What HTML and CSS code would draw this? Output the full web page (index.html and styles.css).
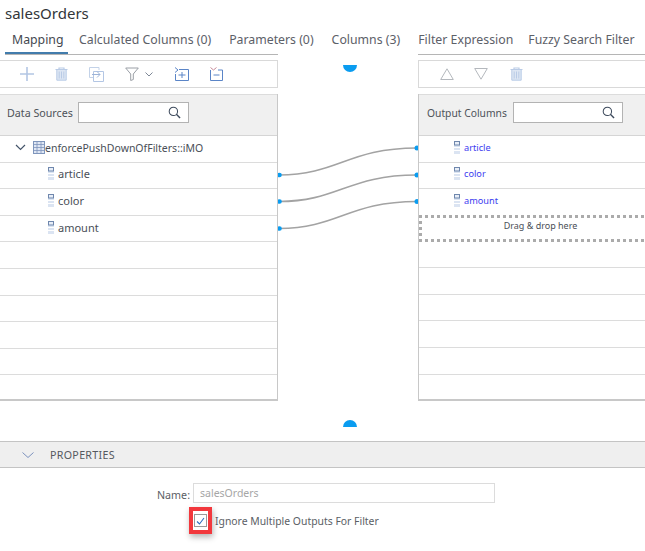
FILE: index.html
```html
<!DOCTYPE html>
<html lang="en">
<head>
<meta charset="utf-8">
<title>salesOrders</title>
<link rel="stylesheet" href="styles.css">
</head>
<body>
<svg class="defs" width="0" height="0" aria-hidden="true">
  <symbol id="col" viewBox="0 0 6 13">
    <rect x="0" y="0" width="6" height="13" fill="#dbe4f2"/>
    <rect x="0.500" y="0.500" width="5" height="3.500" fill="#e8eef7" stroke="#6f87ad"/>
    <path d="M0 6.500h6M0 9.500h6" stroke="#fff"/>
  </symbol>
  <symbol id="search" viewBox="0 0 14 14">
    <circle cx="5.8" cy="5.8" r="4.5" fill="none" stroke="#3d4a5c" stroke-width="1.1"/>
    <path d="M9 9l4 4" stroke="#3d4a5c" stroke-width="1.5"/>
  </symbol>
  <symbol id="trash" viewBox="0 0 13 14">
    <path d="M0.5 2.5h12M4 2.5V1h5v1.5" fill="none" stroke="#b9cbe6" stroke-width="1.2"/>
    <path d="M1.8 3v10.2h9.4V3" fill="#dde6f3" stroke="#b9cbe6"/>
    <path d="M4.2 4.5v7M6.5 4.5v7M8.8 4.5v7" stroke="#b9cbe6"/>
  </symbol>
</svg>

<h1 class="title">salesOrders</h1>

<nav class="tabs">
  <span class="tab tab-active">Mapping</span>
  <span class="tab">Calculated Columns (0)</span>
  <span class="tab">Parameters (0)</span>
  <span class="tab">Columns (3)</span>
  <span class="tab tab-filter">Filter Expression</span>
  <span class="tab">Fuzzy Search Filter</span>
</nav>

<main class="mapping">
  <section class="pane pane-left">
    <div class="toolbar toolbar-left">
      <svg class="tool" width="14" height="14" viewBox="0 0 14 14"><path d="M7 0v14M0 7h14" stroke="#b3c6e4" stroke-width="1.6"/></svg>
      <svg class="tool" width="13" height="14"><use href="#trash"/></svg>
      <svg class="tool" width="15" height="15" viewBox="0 0 15 15"><path d="M10 3V.5H.5v10H4" fill="none" stroke="#c3d2e8"/><path d="M4.5 4.5h10v10h-10z" fill="none" stroke="#b3c6e4"/><path d="M3 7.5h8M8 4.5l3 3-3 3" fill="none" stroke="#9db4d8"/></svg>
      <span class="filter">
        <svg width="14" height="14" viewBox="0 0 14 14"><path d="M.7 1h12.6L8.3 7v5.5l-2.600 1V7z" fill="none" stroke="#9a9fa6"/></svg>
        <svg width="8" height="5" viewBox="0 0 8 5"><path d="M.5.5L4 4 7.5.5" fill="none" stroke="#7d8796"/></svg>
      </span>
      <svg class="tool" width="14" height="14" viewBox="0 0 14 14"><path d="M0 .5l3 2.500-3 2.500" fill="none" stroke="#5b85c7"/><path d="M4 2.500h9.500v11H.5V7" fill="none" stroke="#5b85c7"/><path d="M3.500 8h7M7 5v6" stroke="#5b85c7"/></svg>
      <svg class="tool" width="13" height="14" viewBox="0 0 13 14"><path d="M.5.5l3 2.500 3-2.500" fill="none" stroke="#c68a9a"/><path d="M8 3h4.500v10.500H.5V3" fill="none" stroke="#5b85c7"/><path d="M3.500 8h6" stroke="#5b85c7"/></svg>
    </div>
    <div class="panel">
      <div class="panel-head">
        <label class="panel-label">Data Sources</label>
        <span class="search search-left"><svg width="13" height="13"><use href="#search"/></svg></span>
      </div>
      <ul class="rows rows-left">
        <li class="row row-table">
          <svg class="caret" width="11" height="7" viewBox="0 0 11 7"><path d="M1 1l4.500 4.500L10 1" fill="none" stroke="#44546a" stroke-width="1.200"/></svg>
          <svg width="12" height="13" viewBox="0 0 12 13"><rect x=".5" y=".5" width="11" height="12" fill="#dfe7f4" stroke="#7f96bc"/><path d="M.5 3.500h11M.5 6.500h11M.5 9.500h11M4 .5v12M8 .5v12" stroke="#7f96bc" stroke-width=".8"/></svg>
          <span>enforcePushDownOfFilters::iMO</span>
        </li>
        <li class="row row-col"><svg width="6" height="13"><use href="#col"/></svg><span>article</span></li>
        <li class="row row-col"><svg width="6" height="13"><use href="#col"/></svg><span>color</span></li>
        <li class="row row-col"><svg width="6" height="13"><use href="#col"/></svg><span>amount</span></li>
        <li class="row"></li><li class="row"></li><li class="row"></li><li class="row"></li><li class="row"></li><li class="row"></li>
      </ul>
    </div>
  </section>

  <section class="gutter">
    <span class="handle handle-top"></span>
    <svg class="links" width="140" height="120" viewBox="0 0 140 120">
      <g fill="none" stroke="#a3a3a3" stroke-width="1.600">
        <path d="M1 45C60 45 70 18 139 18"/>
        <path d="M1 71.500C60 71.500 70 45 139 45"/>
        <path d="M1 98.500C60 98.500 70 71.500 139 71.500"/>
      </g>
      <g fill="#0a9cf0">
        <circle cx="1.500" cy="45" r="2.300"/><circle cx="1.500" cy="71.500" r="2.300"/><circle cx="1.500" cy="98.500" r="2.300"/>
        <circle cx="139" cy="18" r="2.500"/><circle cx="139" cy="45" r="2.500"/><circle cx="139" cy="71.500" r="2.500"/>
      </g>
    </svg>
    <span class="handle handle-bottom"></span>
  </section>

  <section class="pane pane-right">
    <div class="toolbar toolbar-right">
      <svg width="14" height="12" viewBox="0 0 14 12"><path d="M7 .8L13.300 11.500H.7z" fill="none" stroke="#b4b8bd"/></svg>
      <svg width="14" height="12" viewBox="0 0 14 12"><path d="M7 11.200L13.300 .5H.7z" fill="none" stroke="#b4b8bd"/></svg>
      <svg class="trash-right" width="13" height="14"><use href="#trash"/></svg>
    </div>
    <div class="panel panel-right">
      <div class="panel-head">
        <label class="panel-label">Output Columns</label>
        <span class="search search-right"><svg width="13" height="13"><use href="#search"/></svg></span>
      </div>
      <ul class="rows rows-right">
        <li class="row row-out"><svg width="6" height="13"><use href="#col"/></svg><span>article</span></li>
        <li class="row row-out"><svg width="6" height="13"><use href="#col"/></svg><span>color</span></li>
        <li class="row row-out row-last-out"><svg width="6" height="13"><use href="#col"/></svg><span>amount</span></li>
        <li class="drop">Drag &amp; drop here</li>
        <li class="row row-r1"></li><li class="row"></li><li class="row"></li><li class="row"></li><li class="row"></li><li class="row row-end"></li>
      </ul>
    </div>
  </section>
</main>

<section class="props">
  <header class="props-head">
    <svg width="12" height="6" viewBox="0 0 12 6"><path d="M.5.500L6 5.500 11.500.5" fill="none" stroke="#7c92bd"/></svg>
    <span>PROPERTIES</span>
  </header>
  <div class="field">
    <label class="field-label">Name:</label>
    <span class="field-input">salesOrders</span>
  </div>
  <div class="check-line">
    <span class="mark">
      <span class="checkbox"><svg width="9" height="8" viewBox="0 0 9 8"><path d="M1 4.500L3.500 7 8 1" fill="none" stroke="#2f6fc0" stroke-width="1.100"/></svg></span>
    </span>
    <span class="check-label">Ignore Multiple Outputs For Filter</span>
  </div>
</section>
</body>
</html>
```

FILE: styles.css
```css
* { box-sizing: border-box; }
html, body { margin: 0; padding: 0; }
body {
  width: 645px;
  height: 551px;
  overflow: hidden;
  background: #fff;
  color: #4a4f57;
  font-family: "Noto Sans", "Open Sans", sans-serif;
  font-size: 11px;
}
.defs { position: absolute; }
.title {
  margin: 0;
  height: 28px;
  padding: 4px 0 0 5px;
  font-size: 15px;
  line-height: 18px;
  font-weight: 400;
  color: #32363a;
}
.tabs {
  display: flex;
  height: 27px;
  padding-left: 5px;
  overflow: hidden;
  white-space: nowrap;
  background: linear-gradient(#b5b5b5, #b5b5b5) 5px 26px / 273px 1px no-repeat,
              linear-gradient(#b5b5b5, #b5b5b5) 418px 26px / 227px 1px no-repeat;
}
.tab {
  flex: none;
  padding: 3px 0 0;
  margin-right: 18px;
  font-size: 12.300px;
  line-height: 17px;
  color: #5c6068;
}
.tab-active {
  width: 63px;
  padding-left: 7px;
  margin-right: 11px;
  height: 26px;
  color: #44484f;
  border-bottom: 2px solid #427cac;
}
.tab-filter { margin-right: 15px; }
.mapping {
  display: flex;
  height: 386px;
  padding-top: 5px;
}
.pane-left { width: 278px; flex: none; }
.gutter {
  position: relative;
  width: 140px;
  flex: none;
}
.pane-right { flex: 1; min-width: 0; }
.toolbar {
  display: flex;
  align-items: center;
  height: 28px;
  background: #fff;
  border: 1px solid #d9d9d9;
}
.toolbar-left { border-left: 0; padding-left: 20px; }
.toolbar-right { border-right: 0; padding-left: 21px; gap: 20px; }
.trash-right { margin-left: 2px; }
.tool { flex: none; margin-right: 21px; }
.filter {
  display: flex;
  align-items: center;
  gap: 6px;
  margin-right: 22px;
}
.panel {
  margin-top: 6px;
  border-right: 1px solid #c8c8c8;
  border-bottom: 2px solid #c8c8c8;
  height: 307px;
}
.panel-right {
  border-right: 0;
  border-left: 1px solid #c8c8c8;
}
.panel-head {
  display: flex;
  align-items: center;
  height: 42px;
  padding: 0 0 5px 7px;
  background: #f0f0f0;
  border-top: 1px solid #dcdcdc;
  border-bottom: 1px solid #d5d5d5;
}
.panel-right .panel-head { padding-left: 8px; }
.panel-label { font-size: 10.700px; color: #4d5259; white-space: nowrap; }
.panel-right .panel-label { font-size: 10.300px; }
.search {
  display: flex;
  align-items: center;
  justify-content: flex-end;
  height: 21px;
  padding-right: 7px;
  background: #fff;
  border: 1px solid #b3b3b3;
}
.search-left { width: 111px; margin-left: 5px; }
.search-right { width: 110px; margin-left: 6px; }
.rows { list-style: none; margin: 0; padding: 0; }
.row {
  display: flex;
  align-items: center;
  height: 26.600px;
  border-bottom: 1px solid #dcdcdc;
  font-size: 11px;
  color: #4a4f57;
}
.rows-left .row:last-child { border-bottom: 0; }
.row-table { padding-left: 15px; padding-bottom: 2px; }
.row-table .caret { margin-right: 7px; }
.row-table span { font-size: 10.500px; white-space: nowrap; }
.row-col { padding-left: 48px; padding-bottom: 3px; }
.row-col span { margin-left: 4px; }
.row-out { padding-left: 35px; padding-bottom: 3px; }
.row-out span { margin-left: 4px; color: #3c3cf0; font-size: 9.200px; }
.row-last-out { border-bottom: 0; height: 26px; }
.drop {
  height: 27px;
  padding: 3px 0 0 17px;
  text-align: center;
  font-size: 9px;
  line-height: 15px;
  color: #4a4f57;
  background:
    repeating-linear-gradient(90deg, #ababab 0 3px, transparent 3px 6px) 0 0 / 100% 3px no-repeat,
    repeating-linear-gradient(90deg, #ababab 0 3px, transparent 3px 6px) 0 100% / 100% 3px no-repeat,
    repeating-linear-gradient(0deg, #ababab 0 3px, transparent 3px 6px) 0 0 / 3px 100% no-repeat;
}
.row-r1 { height: 26px; margin-top: 0; }
.rows-right .row-end { border-bottom: 0; height: 29px; }
.handle {
  position: absolute;
  left: 65px;
  width: 14px;
  height: 7px;
  background: #0a9cf0;
}
.handle-top { top: 5px; border-radius: 0 0 7px 7px; }
.handle-bottom { top: 360px; border-radius: 7px 7px 0 0; }
.links { position: absolute; left: 0; top: 70px; }
.props {
  height: 110px;
}
.props-head {
  display: flex;
  align-items: center;
  height: 27px;
  padding-left: 22px;
  gap: 16px;
  background: #efefef;
  border-top: 1px solid #c4c4c4;
  border-bottom: 1px solid #c4c4c4;
  font-size: 10.700px;
  letter-spacing: .3px;
  color: #55595f;
}
.field {
  display: flex;
  align-items: flex-start;
  margin-top: 15px;
  padding-left: 157px;
}
.field-label { width: 33px; font-size: 10.700px; line-height: 15px; margin-top: 5px; color: #5a5e65; }
.field-input {
  display: block;
  width: 302px;
  height: 20px;
  margin-left: 3px;
  padding-left: 6px;
  border: 1px solid #dcdcdc;
  font-size: 10.500px;
  line-height: 18px;
  color: #a6a6a6;
}
.check-line {
  display: flex;
  align-items: center;
  margin-top: 4px;
  padding-left: 189px;
}
.mark {
  display: flex;
  align-items: center;
  justify-content: center;
  width: 23px;
  height: 27px;
  border: 4px solid #f2383d;
  box-shadow: 1px 3px 6px rgba(0,0,0,.3);
}
.checkbox {
  display: flex;
  align-items: center;
  justify-content: center;
  width: 13px;
  height: 13px;
  background: #fff;
  border: 1px solid #9a9a9a;
}
.check-label { margin-left: 3px; font-size: 10.400px; color: #5a5e65; }
```
